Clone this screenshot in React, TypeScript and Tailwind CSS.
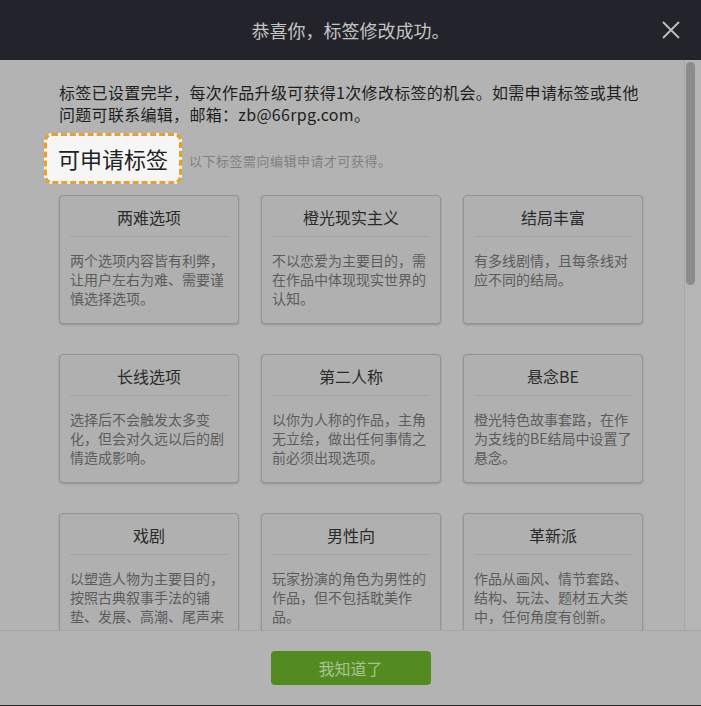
import React from 'react';

interface Tag {
  title: string;
  desc: string;
}

const tags: Tag[] = [
  { title: '两难选项', desc: '两个选项内容皆有利弊，让用户左右为难、需要谨慎选择选项。' },
  { title: '橙光现实主义', desc: '不以恋爱为主要目的，需在作品中体现现实世界的认知。' },
  { title: '结局丰富', desc: '有多线剧情，且每条线对应不同的结局。' },
  { title: '长线选项', desc: '选择后不会触发太多变化，但会对久远以后的剧情造成影响。' },
  { title: '第二人称', desc: '以你为人称的作品，主角无立绘，做出任何事情之前必须出现选项。' },
  { title: '悬念BE', desc: '橙光特色故事套路，在作为支线的BE结局中设置了悬念。' },
  { title: '戏剧', desc: '以塑造人物为主要目的，按照古典叙事手法的铺垫、发展、高潮、尾声来推进故事情节。' },
  { title: '男性向', desc: '玩家扮演的角色为男性的作品，但不包括耽美作品。' },
  { title: '革新派', desc: '作品从画风、情节套路、结构、玩法、题材五大类中，任何角度有创新。' },
];

const TagCard: React.FC<{ tag: Tag }> = ({ tag }) => (
  <div className="h-[129px] bg-[#b0b0b0] border border-[#939393] rounded-[4px] shadow-[0_1px_2px_rgba(0,0,0,0.18)] px-[10px] pt-[11px] overflow-hidden">
    <div className="text-center text-[16px] leading-[20px] text-[#2a2a2a]">{tag.title}</div>
    <div className="mt-[9px] h-px bg-[#a2a2a2]" />
    <div className="mt-[14px] h-[57px] overflow-hidden">
      <p className="text-[14px] leading-[19px] text-[#5c5c5c]">{tag.desc}</p>
    </div>
  </div>
);

export default function App() {
  return (
    <div
      className="w-[701px] h-[706px] bg-[#262626] overflow-hidden"
      style={{ fontFamily: '"Noto Sans CJK SC", "Liberation Sans", sans-serif' }}
    >
      <div className="h-[705px] flex flex-col bg-[#b3b3b3]">
        {/* header */}
        <div className="h-[60px] shrink-0 bg-[#23242b] relative flex items-center justify-center">
          <span className="text-[18px] text-[#c4c4c4]">恭喜你，标签修改成功。</span>
          <button className="absolute right-[20px] top-[20px] w-[20px] h-[20px]">
            <svg width="20" height="20" viewBox="0 0 20 20">
              <path d="M2 2 L18 18 M18 2 L2 18" stroke="#c0c0c0" strokeWidth="1.8" />
            </svg>
          </button>
        </div>

        {/* body */}
        <div className="flex-1 flex overflow-hidden">
          <div className="flex-1 overflow-hidden pl-[59px] pt-[21px]">
            <p className="w-[584px] text-[16px] leading-[22px] tracking-[0.3px] text-[#1e1e1e]">
              标签已设置完毕，每次作品升级可获得1次修改标签的机会。如需申请标签或其他问题可联系编辑，邮箱：zb@66rpg.com。
            </p>
            <div className="mt-[8px] -ml-[15px] flex items-center gap-[7px]">
              <div className="h-[51px] flex items-center px-[11px] bg-[#f6f6f6] border-[3px] border-dashed border-[#e9a12c] rounded-[8px] text-[22px] text-[#222]">
                可申请标签
              </div>
              <span className="mt-[4px] text-[13px] tracking-[0.5px] text-[#808080]">以下标签需向编辑申请才可获得。</span>
            </div>
            <div className="mt-[11px] grid grid-cols-[repeat(3,180px)] gap-x-[22px] gap-y-[30px]">
              {tags.map((t) => (
                <TagCard key={t.title} tag={t} />
              ))}
            </div>
          </div>
          {/* scrollbar */}
          <div className="w-[17px] shrink-0 border-l border-[#a8a8a8] bg-[#b5b5b5] pl-[1px] pt-[2px]">
            <div className="w-[9px] h-[223px] rounded-full bg-[#8b8b8b]" />
          </div>
        </div>

        {/* footer */}
        <div className="h-[75px] shrink-0 border-t border-[#a4a4a4] flex justify-center pt-[20px]">
          <button className="w-[160px] h-[34px] rounded-[4px] bg-[#548b20] text-[16px] text-[#aac48f]">
            我知道了
          </button>
        </div>
      </div>
    </div>
  );
}
